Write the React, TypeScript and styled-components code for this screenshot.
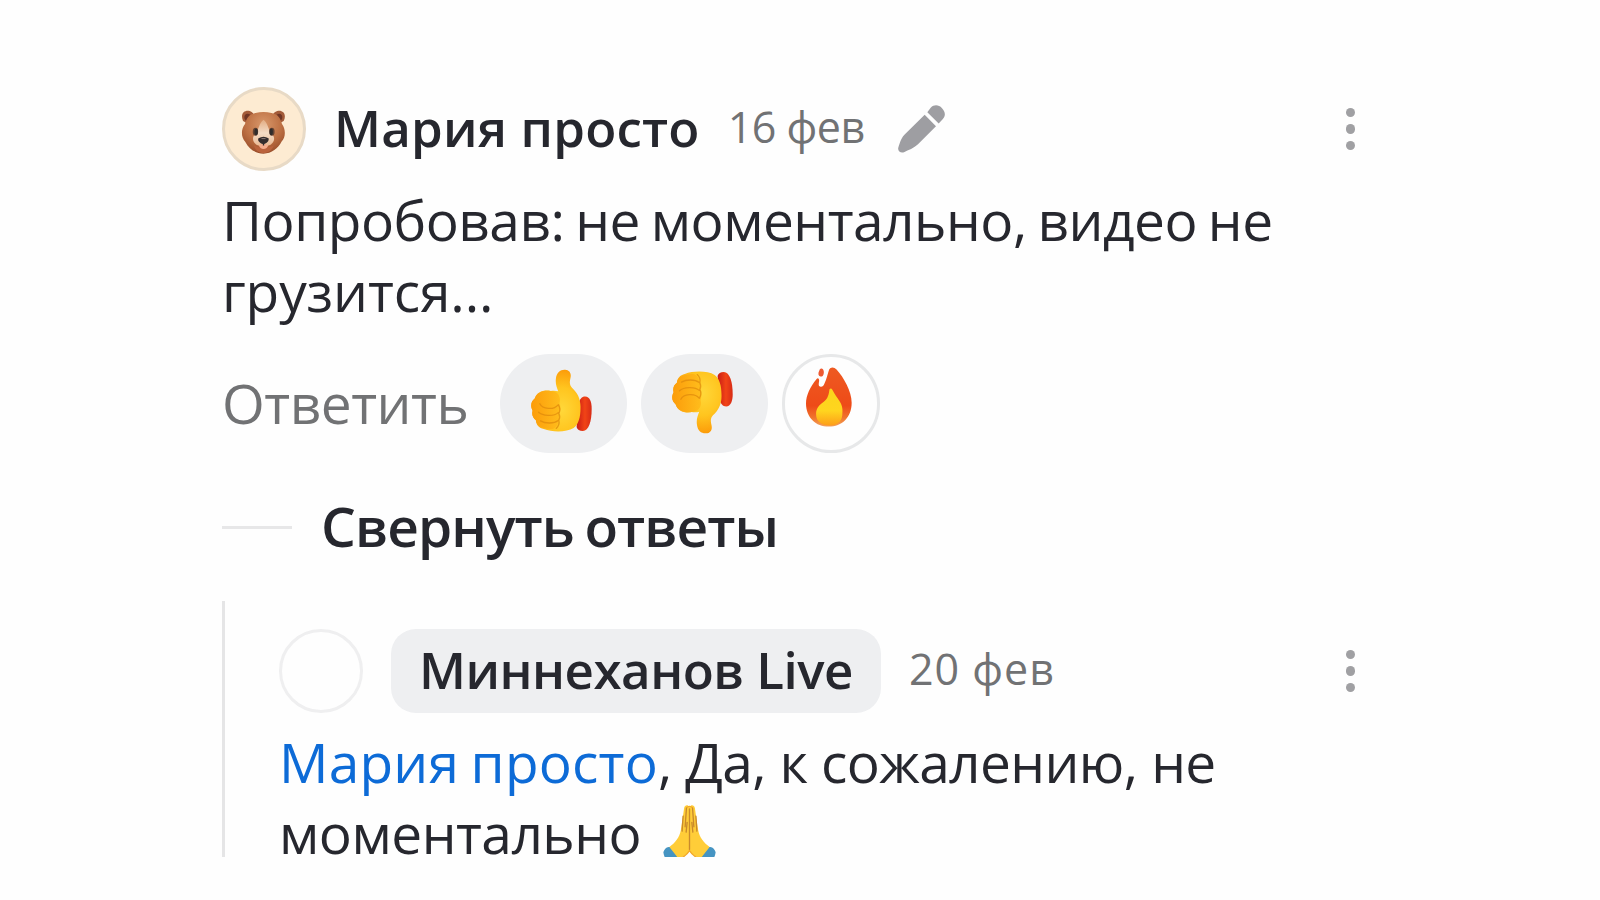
import * as React from 'react';
import styled, {createGlobalStyle} from 'styled-components';

const GlobalStyle = createGlobalStyle`
  body {
    margin: 0;
    background: #fefefe;
    color: #26272e;
    font-family: "Open Sans", "Noto Sans", sans-serif;
  }
`;

const Feed = styled.main`
  box-sizing: border-box;
  height: 857px;
  padding: 87px 245px 0 222px;
`;

const Header = styled.header`
  display: flex;
  align-items: center;
  height: 84px;
`;

const Avatar = styled.div<{ $color?: string; $border: string }>`
  box-sizing: border-box;
  display: flex;
  align-items: center;
  justify-content: center;
  width: 84px;
  height: 84px;
  margin-right: 28px;
  border: 3px solid ${p => p.$border};
  border-radius: 50%;
  background: ${p => p.$color || '#fefefe'};
`;

const Name = styled.span`
  padding-bottom: 5px;
  font-size: 51px;
  font-weight: 600;
  line-height: 70px;
  letter-spacing: 0.2px;
  white-space: nowrap;
`;

const Badge = styled.div`
  box-sizing: border-box;
  display: flex;
  align-items: center;
  width: 490px;
  height: 84px;
  padding-left: 28px;
  border-radius: 25px;
  background: #eeeff1;
  ${Name} {
    padding-bottom: 4px;
    letter-spacing: -0.5px;
  }
`;

const DateText = styled.time<{ $spacing: number }>`
  margin-left: 28px;
  padding-bottom: 4px;
  color: #717274;
  font-size: 43px;
  line-height: 60px;
  letter-spacing: ${p => p.$spacing}px;
  white-space: nowrap;
`;

const EditIcon = styled.svg`
  width: 47px;
  height: 48px;
  margin-left: 33px;
`;

const MenuButton = styled.button`
  display: grid;
  gap: 7px;
  margin-left: auto;
  padding: 0;
  border: 0;
  background: none;
`;

const Dot = styled.span`
  width: 9.5px;
  height: 9.5px;
  border-radius: 50%;
  background: #a0a0a3;
`;

const Message = styled.p<{ $top: number }>`
  margin: ${p => p.$top}px 0 0;
  font-size: 55px;
  line-height: 70.5px;
  letter-spacing: -0.5px;
  word-spacing: -3px;
  white-space: nowrap;
`;

const Mention = styled.a`
  color: #0d6bd7;
  letter-spacing: 0.2px;
`;

const Loose = styled.span<{ $spacing: number }>`
  letter-spacing: ${p => p.$spacing}px;
  word-spacing: 0;
`;

const Actions = styled.div`
  display: flex;
  align-items: center;
  height: 99px;
  margin-top: 28px;
`;

const ReplyButton = styled.button`
  width: 278px;
  padding: 0 0 2px;
  border: 0;
  background: none;
  color: #717274;
  font: inherit;
  font-size: 55px;
  line-height: 70px;
  letter-spacing: -0.5px;
  text-align: left;
`;

const Reaction = styled.button<{ $outlined?: boolean }>`
  box-sizing: border-box;
  display: flex;
  justify-content: center;
  width: ${p => p.$outlined ? 98 : 127}px;
  height: 99px;
  margin-right: 14px;
  padding: ${p => p.$outlined ? '10px 4px 0 0' : '15px 4px 0 0'};
  border: ${p => p.$outlined ? '3px solid #e7e8e9' : '0'};
  border-radius: 50px;
  background: ${p => p.$outlined ? '#fefefe' : '#eeeff1'};
`;

const Thumb = styled.svg<{ $down?: boolean }>`
  width: 61px;
  height: 63px;
  transform: ${p => p.$down ? 'translateY(2px) scaleY(-1)' : 'none'};
`;

const Flame = styled.svg`
  width: 46px;
  height: 60px;
`;

const Bear = styled.svg`
  width: 45px;
  height: 44px;
  margin: 5px 2px 0 0;
`;

const Pray = styled.svg`
  width: 53px;
  height: 54px;
  margin-left: 11px;
  vertical-align: -5px;
`;

const Toggle = styled.button`
  display: flex;
  align-items: center;
  gap: 29px;
  height: 60px;
  margin-top: 44px;
  padding: 0;
  border: 0;
  background: none;
  color: inherit;
  font: inherit;
  &::before {
    content: '';
    width: 70px;
    height: 3px;
    background: #e7e7e8;
  }
`;

const ToggleText = styled.span`
  padding-bottom: 3px;
  font-size: 55px;
  font-weight: 600;
  line-height: 60px;
  letter-spacing: -0.9px;
  word-spacing: -3px;
`;

const Thread = styled.section`
  box-sizing: border-box;
  height: 256px;
  margin-top: 44px;
  padding: 28px 0 0 54px;
  border-left: 3px solid #e5e5e6;
`;

const Menu = () => <MenuButton aria-label='Меню'><Dot/><Dot/><Dot/></MenuButton>;

const BearFace = () => (
    <Bear viewBox='49 59 134 131'>
        <defs>
            <radialGradient id='fur' cx='.5' cy='.3' r='.7'>
                <stop offset='0' stopColor='#d9986b'/>
                <stop offset='.6' stopColor='#bd7043'/>
                <stop offset='1' stopColor='#9a4e2a'/>
            </radialGradient>
            <linearGradient id='muzzle' x2='0' y2='1'>
                <stop offset='0' stopColor='#e2ac83'/>
                <stop offset='.5' stopColor='#f4dcc6'/>
                <stop offset='1' stopColor='#e9b892'/>
            </linearGradient>
        </defs>
        <path fill='#a35b39' d='M55 92C46 70 59 58 75 62c9 3 13 9 13 17L66 98zM176 92c10-20-2-34-19-30-10 3-14 9-14 17l22 19z'/>
        <path fill='#6f3524' d='M60 86c-4-13 5-20 17-13l2 8-13 14zM171 86c4-13-5-20-16-13l-3 8 13 14z'/>
        <path fill='url(#fur)' d='M92 68q24-6 48 0c20 4 27 16 31 33 12 17 11 39-1 52-10 20-30 36-54 36s-44-15-54-35c-13-15-14-36-1-53 4-17 11-29 31-33z'/>
        <path fill='url(#muzzle)' d='M116 88c14 11 14 30 24 42 11 9 9 22 1 29-7 11-43 11-50 0-8-8-9-20 1-29 10-12 10-31 24-42z'/>
        <path fill='#ba633d' d='M87 164c10 8 50 8 60 0-6 17-18 23-31 23s-24-6-29-23z'/>
        <path fill='#f5ad8d' d='M102 164q14-8 28 0c-2 14-25 15-28 0z'/>
        <ellipse cx='92' cy='124' rx='8' ry='12' fill='#654332'/>
        <ellipse cx='141' cy='124' rx='8' ry='12' fill='#654332'/>
        <ellipse cx='94' cy='124' rx='5' ry='10' fill='#302d2c'/>
        <ellipse cx='139' cy='124' rx='5' ry='10' fill='#302d2c'/>
        <path fill='#342c2d' d='M101 143q15-9 30 0c3 8-7 16-13 17v5h-4v-5c-8-2-17-9-13-17z'/>
        <path stroke='#8b7772' strokeWidth='3' d='M110 144h12'/>
    </Bear>
);

const ThumbIcon: React.FC<{ down?: boolean }> = props => (
    <Thumb $down={props.down} viewBox='36 40 184 192'>
        <defs>
            <radialGradient id='hand' cx='.62' cy='.65' r='.65'>
                <stop offset='0' stopColor='#ffd83a'/>
                <stop offset='.55' stopColor='#ffc51f'/>
                <stop offset='1' stopColor='#fc9c0a'/>
            </radialGradient>
            <linearGradient id='cuff'>
                <stop offset='0' stopColor='#c91c16'/>
                <stop offset='.55' stopColor='#f14416'/>
                <stop offset='1' stopColor='#d72b16'/>
            </linearGradient>
            <linearGradient id='fingers'>
                <stop offset='0' stopColor='#fc9c0a'/>
                <stop offset='1' stopColor='#ffbd1c'/>
            </linearGradient>
        </defs>
        <path fill='url(#cuff)' d='M180 146c3-14 10-22 20-22 14 0 20 16 20 37 0 38-9 67-27 68-10 0-17-4-19-12z'/>
        <path fill='url(#hand)' d='M118 108c-5-13-9-24-7-39 2-19 14-28 28-27 15 1 20 13 16 27-3 12-2 20 5 28 17 16 27 35 26 62 0 28-6 50-21 61-22 13-64 13-91 3-14-3-24-14-24-27-10-7-13-18-10-29-8-15-4-29 6-36 6-22 29-28 49-24 8-1 16-1 23 1z'/>
        <path fill='url(#fingers)' d='M95 107c22 0 32 17 27 37 4 11 3 24-2 33 3 20-2 39-18 46-24 0-50-6-52-27-10-7-13-18-10-29-8-15-4-29 6-36 7-20 28-27 49-24z'/>
        <path fill='none' stroke='#df8a0c' strokeWidth='4' strokeLinecap='round' opacity='.75' d='M62 146c8 16 42 20 55 4M58 172c12 11 46 14 60 1M64 198c13 8 40 10 54-1M118 149q9 12 2 27 5 9 0 20 3 15-8 25'/>
    </Thumb>
);

const FlameIcon = () => (
    <Flame viewBox='863 35 137 178'>
        <defs>
            <linearGradient id='fire' x2='0' y2='1'>
                <stop offset='0' stopColor='#ee5a22'/>
                <stop offset='.65' stopColor='#ee4b18'/>
                <stop offset='.85' stopColor='#f0752d'/>
                <stop offset='1' stopColor='#f5a15a'/>
            </linearGradient>
            <linearGradient id='core' x2='0' y2='1'>
                <stop offset='0' stopColor='#fbd51b'/>
                <stop offset='.6' stopColor='#ffd51f'/>
                <stop offset='1' stopColor='#fd9e19'/>
            </linearGradient>
        </defs>
        <path fill='url(#fire)' d='M932 42c4-8 15-8 22 0 21 23 45 65 45 99 0 44-29 71-68 71s-68-27-68-69c0-24 13-50 31-72 5-6 9-1 8 6-1 6-3 15 3 16 5 2 10-1 13-9 7-15 9-28 14-42z'/>
        <path fill='#ee5a32' d='M903 44c4-8 12-5 13 4 1 8-3 17-10 15-7-3-8-10-3-19z'/>
        <path fill='url(#core)' d='M933 101c3-4 6-3 8 1 8 15 15 24 22 35 8 12 10 23 8 41-2 21-17 31-38 31-24 0-40-11-40-34 0-17 9-28 23-37 12-8 15-22 17-37z'/>
    </Flame>
);

const PrayIcon = () => (
    <Pray viewBox='69 582 158 161'>
        <path fill='#4594c2' d='M86 707c-8 1-14 8-16 16 3 18 12 33 30 41l26-25-28-32zM210 707c8 1 14 8 16 16-3 18-12 33-30 41l-26-25 28-32z'/>
        <path fill='#ffcd38' d='M148 588c-5-8-14-6-16 3l-10 67c-4 21-17 37-34 49l25 32c14-1 26-7 35-20 9 13 21 19 35 20l25-32c-17-12-30-28-34-49l-10-67c-2-9-11-11-16-3z'/>
        <path fill='none' stroke='#c98a2c' strokeWidth='4' strokeLinecap='round' d='M148 594v121M139 590l-4 57M157 590l4 57M129 615l-3 45M167 615l3 45M141 634l-3 29M155 634l3 29'/>
        <path fill='none' stroke='#f2a82a' strokeWidth='4' d='M139 590q9-8 18 0M106 741q25 3 42-23 17 26 42 23'/>
    </Pray>
);

export default function App() {
    return (
        <>
            <GlobalStyle/>
            <Feed>
                <Header>
                    <Avatar $color='#fdebd2' $border='#e8dac6'><BearFace/></Avatar>
                    <Name>Мария просто</Name>
                    <DateText $spacing={-0.5}>16 фев</DateText>
                    <EditIcon viewBox='595 105 141 143' fill='#9e9ea2'>
                        <path d='M675 134l34 34-54 54c-12 12-29 17-42 24-10 4-20-4-17-14 5-15 9-31 22-42z'/>
                        <path d='M683 126l10-13c11-11 24-9 34 1s12 23 2 33l-12 13z'/>
                    </EditIcon>
                    <Menu/>
                </Header>
                <Message $top={14}>
                    Попробовав: не моментально, видео не<br/>
                    <Loose $spacing={-0.1}>грузится...</Loose>
                </Message>
                <Actions>
                    <ReplyButton>Ответить</ReplyButton>
                    <Reaction><ThumbIcon/></Reaction>
                    <Reaction><ThumbIcon down/></Reaction>
                    <Reaction $outlined><FlameIcon/></Reaction>
                </Actions>
                <Toggle><ToggleText>Свернуть ответы</ToggleText></Toggle>
                <Thread>
                    <Header>
                        <Avatar $border='#efeff0'/>
                        <Badge><Name>Миннеханов Live</Name></Badge>
                        <DateText $spacing={1}>20 фев</DateText>
                        <Menu/>
                    </Header>
                    <Message $top={14}>
                        <Mention>Мария просто</Mention><Loose $spacing={-0.6}>, Да, к сожалению, не</Loose><br/>
                        моментально <PrayIcon/>
                    </Message>
                </Thread>
            </Feed>
        </>
    );
}
